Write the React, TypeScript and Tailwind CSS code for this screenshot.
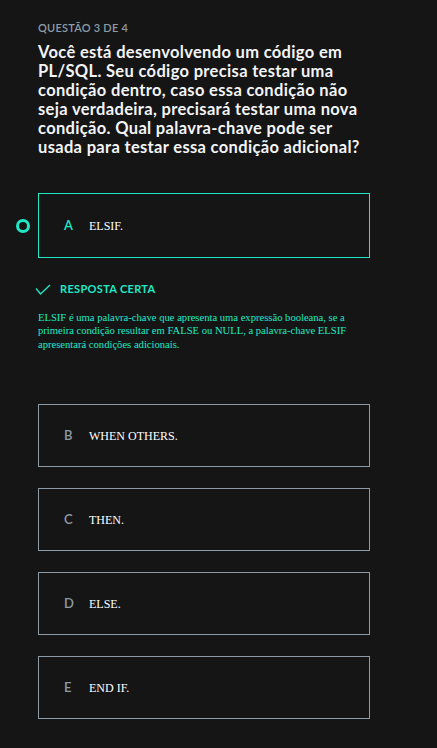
const options = [
  { letter: "B", text: "WHEN OTHERS." },
  { letter: "C", text: "THEN." },
  { letter: "D", text: "ELSE." },
  { letter: "E", text: "END IF." },
]

const sans = "font-['Lato','Liberation_Sans',sans-serif]"
const serif = "font-['Liberation_Serif','Times_New_Roman',serif]"

export default function App() {
  return (
    <div className="min-h-[748px] w-full bg-[#151515] text-white">
      <div className="w-[370px] pl-[38px] pt-[21px]">
        <p className={`${sans} text-[11px] font-semibold tracking-[0.02em] leading-[14px] text-[#8d9ba6]`}>
          QUESTÃO 3 DE 4
        </p>
        <h1
          className={`${sans} mt-[8px] text-[16.5px] font-bold leading-[19px] tracking-[0.02em] text-[#f3f4f6]`}
        >
          Você está desenvolvendo um código em PL/SQL. Seu código precisa testar uma condição dentro, caso essa
          condição não seja verdadeira, precisará testar uma nova condição. Qual palavra-chave pode ser usada para
          testar essa condição adicional?
        </h1>
      </div>

      <div className="relative ml-[38px] mt-[36px] w-[332px]">
        <span className="absolute left-[-22px] top-1/2 h-[14px] w-[14px] -translate-y-1/2 rounded-full border-[3.5px] border-[#1de9c6]" />
        <div className="flex h-[65px] items-center border border-[#1de9c6] pl-[25px]">
          <span className={`${sans} w-[25px] text-[13px] font-semibold text-[#1de9c6]`}>A</span>
          <span className={`${serif} text-[12px] text-white`}>ELSIF.</span>
        </div>
      </div>

      <div className="ml-[38px] mt-[23px] w-[332px]">
        <div className="flex items-center">
          <svg width="16" height="11" viewBox="0 0 16 11" className="ml-[-3px]" fill="none">
            <path d="M1 4.5 L5.5 10 L15 1" stroke="#1de9c6" strokeWidth="1.3" />
          </svg>
          <span className={`${sans} ml-[9px] text-[11px] font-bold tracking-[0.03em] text-[#1de9c6]`}>
            RESPOSTA CERTA
          </span>
        </div>
        <p className={`${serif} mt-[13px] w-[310px] text-[10.6px] leading-[13.5px] text-[#1de9c6]`}>
          ELSIF é uma palavra-chave que apresenta uma expressão booleana, se a primeira condição resultar em FALSE ou
          NULL, a palavra-chave ELSIF apresentará condições adicionais.
        </p>
      </div>

      <div className="ml-[38px] mt-[53px] flex w-[332px] flex-col gap-[21px] pb-[29px]">
        {options.map((o) => (
          <div key={o.letter} className="flex h-[63px] items-center border border-[#8d9ba6] pl-[25px]">
            <span className={`${sans} w-[25px] text-[13px] font-semibold text-[#8d9ba6]`}>{o.letter}</span>
            <span className={`${serif} text-[12px] text-white`}>{o.text}</span>
          </div>
        ))}
      </div>
    </div>
  )
}
